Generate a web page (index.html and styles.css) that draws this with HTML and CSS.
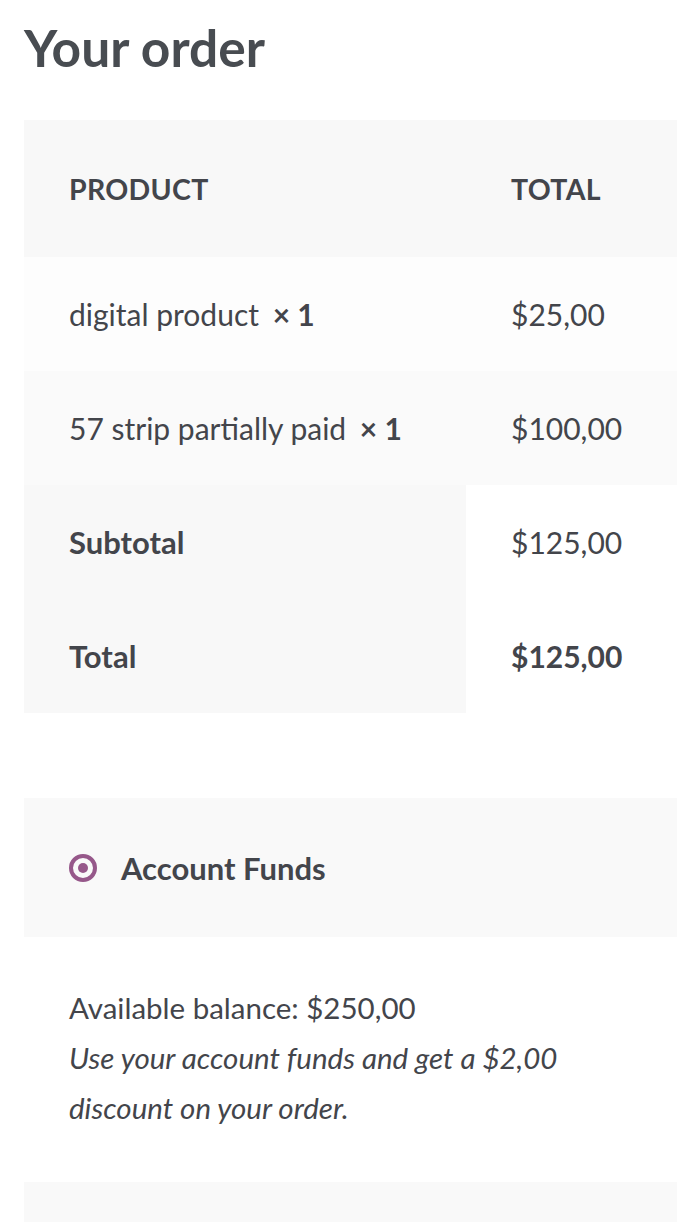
FILE: index.html
```html
<!DOCTYPE html>
<html lang="en">
<head>
<meta charset="utf-8">
<title>Your order</title>
<link rel="stylesheet" href="styles.css">
</head>
<body>
<div class="page">
  <h3 class="order-title">Your order</h3>
  <table class="order-table">
    <thead>
      <tr><th class="col-name">Product</th><th class="col-total">Total</th></tr>
    </thead>
    <tbody>
      <tr class="odd"><td>digital product <strong class="qty">&times;&nbsp;1</strong></td><td>$25,00</td></tr>
      <tr class="even"><td>57 strip partially paid <strong class="qty">&times;&nbsp;1</strong></td><td>$100,00</td></tr>
    </tbody>
    <tfoot>
      <tr><th>Subtotal</th><td>$125,00</td></tr>
      <tr><th>Total</th><td><strong>$125,00</strong></td></tr>
    </tfoot>
  </table>

  <div class="payment">
    <div class="method">
      <span class="radio"><span class="dot"></span></span>
      <span class="method-label">Account Funds</span>
    </div>
    <div class="method-box">
      <p>Available balance: $250,00<br><em>Use your account funds and get a $2,00 discount on your order.</em></p>
    </div>
    <div class="next-box"></div>
  </div>
</div>
</body>
</html>
```

FILE: styles.css
```css
html, body {
  margin: 0;
  padding: 0;
  background: #ffffff;
}
body {
  font-family: Lato, "Open Sans", sans-serif;
  color: #43454b;
}
.page {
  padding: 0 17px 0 24px;
}
.order-title {
  margin: 0;
  padding-top: 17px;
  height: 120px;
  font-size: 51.5px;
  line-height: 60px;
  font-weight: 700;
  color: #484c51;
  box-sizing: border-box;
}
.order-table {
  width: 100%;
  border-collapse: collapse;
  border-spacing: 0;
  font-size: 30px;
  margin: 0;
}
.order-table th,
.order-table td {
  text-align: left;
  padding: 0 0 0 45px;
  line-height: 46px;
  vertical-align: middle;
}
.order-table thead th {
  background: #f8f8f8;
  height: 137px;
  text-transform: uppercase;
  font-size: 28.5px;
  font-weight: 700;
  letter-spacing: 0.3px;
}
.order-table .col-name { width: 397px; }
.order-table tbody td { height: 114px; }
.order-table tbody tr.odd td { background: #fdfdfd; }
.order-table tbody tr.even td { background: #fafafa; }
.order-table tfoot th {
  background: #f8f8f8;
  height: 114px;
  font-weight: 700;
  font-size: 31px;
}
.order-table tfoot td { background: #ffffff; }
.qty { margin-left: 6px; }
.payment {
  margin-top: 85px;
}
.method {
  background: #f9f9f9;
  height: 139px;
  display: flex;
  align-items: center;
  padding-left: 45px;
  box-sizing: border-box;
}
.radio {
  width: 28px;
  height: 28px;
  border-radius: 50%;
  border: 4px solid #96588a;
  box-sizing: border-box;
  display: flex;
  align-items: center;
  justify-content: center;
}
.dot {
  width: 10px;
  height: 10px;
  border-radius: 50%;
  background: #96588a;
}
.method-label {
  margin-left: 24px;
  font-size: 31px;
  font-weight: 700;
}
.method-box {
  height: 245px;
  padding: 46px 60px 0 45px;
  box-sizing: border-box;
}
.method-box p {
  margin: 0;
  font-size: 29.5px;
  line-height: 50px;
}
.next-box {
  background: #f9f9f9;
  height: 60px;
}
```
